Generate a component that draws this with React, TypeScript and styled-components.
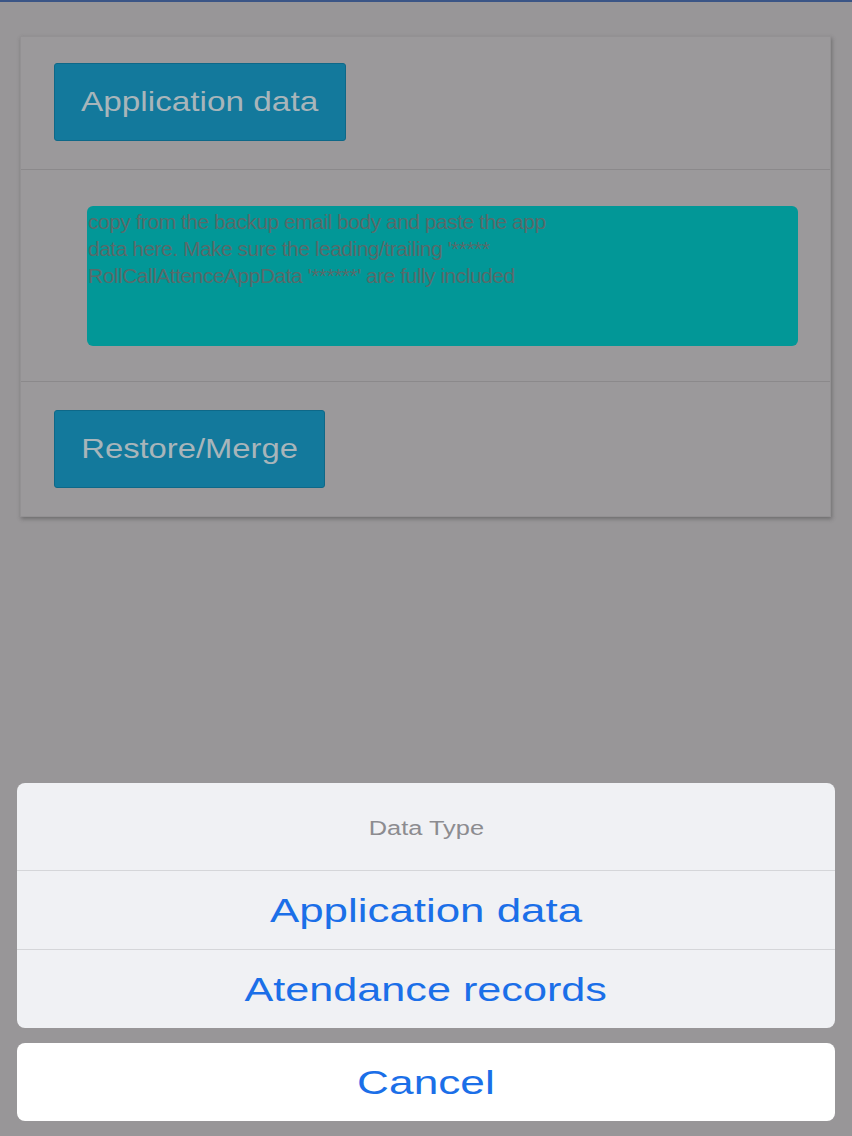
import React from "react";
import styled, { createGlobalStyle } from "styled-components";

const Global = createGlobalStyle`
  html, body { margin: 0; padding: 0; }
  body {
    background: #989698;
    font-family: "Liberation Sans", Arial, sans-serif;
    width: 852px;
    height: 1136px;
    overflow: hidden;
  }
`;

const Page = styled.div`
  position: relative;
  width: 852px;
  height: 1136px;
  border-top: 2px solid #3b5586;
  box-sizing: border-box;
  padding: 34px 21px 0 20px;
`;

const Card = styled.div`
  background: #9b999b;
  border: 1px solid #939193;
  box-shadow: 1px 2px 4px rgba(60, 60, 60, 0.45);
  display: flex;
  flex-direction: column;
`;

const Section = styled.div<{ $pt: number; $pb: number; $pl: number; $pr?: number }>`
  padding: ${(p) => p.$pt}px ${(p) => p.$pr ?? 0}px ${(p) => p.$pb}px ${(p) => p.$pl}px;
  display: flex;
  & + & {
    border-top: 1px solid #8b898b;
  }
`;

const Stretch = styled.span<{ $sx: number }>`
  display: inline-block;
  white-space: nowrap;
  transform: scaleX(${(p) => p.$sx});
  transform-origin: center;
`;

const Button = styled.button<{ $w: number }>`
  width: ${(p) => p.$w}px;
  height: 78px;
  padding: 0;
  display: flex;
  align-items: center;
  justify-content: center;
  background: #13799c;
  border: 1px solid #0e6888;
  border-radius: 3px;
  color: #a8b5ba;
  font-family: "Liberation Sans", Arial, sans-serif;
  font-size: 28px;
  cursor: pointer;
`;

const DataArea = styled.textarea`
  flex: 1;
  height: 140px;
  box-sizing: border-box;
  background: #029797;
  border: none;
  border-radius: 6px;
  padding: 2px 0 0 1px;
  resize: none;
  font-family: "Liberation Sans", Arial, sans-serif;
  font-size: 21px;
  line-height: 27px;
  letter-spacing: -0.5px;
  color: #596a6a;
  outline: none;
  &::placeholder {
    color: #596a6a;
  }
`;

const Sheet = styled.div`
  position: absolute;
  left: 17px;
  right: 17px;
  bottom: 15px;
  display: flex;
  flex-direction: column;
  gap: 15px;
`;

const Group = styled.div<{ $white?: boolean }>`
  background: ${(p) => (p.$white ? "#ffffff" : "#f0f1f4")};
  border-radius: 8px;
  overflow: hidden;
  display: flex;
  flex-direction: column;
`;

const Title = styled.div`
  height: 88px;
  padding-top: 3px;
  box-sizing: border-box;
  display: flex;
  align-items: center;
  justify-content: center;
  color: #8c8c90;
  font-size: 20px;
  border-bottom: 1px solid #d5d6d9;
`;

const Option = styled.div`
  height: 78px;
  display: flex;
  align-items: center;
  justify-content: center;
  color: #1b6fe8;
  font-size: 34px;
  & + & {
    border-top: 1px solid #d5d6d9;
  }
`;

export default function App() {
  return (
    <>
      <Global />
      <Page>
        <Card>
          <Section $pt={26} $pb={28} $pl={33}>
            <Button $w={292}>
              <Stretch $sx={1.19}>Application data</Stretch>
            </Button>
          </Section>
          <Section $pt={36} $pb={35} $pl={66} $pr={32}>
            <DataArea
              placeholder={
                "copy from the backup email body and paste the app\ndata here. Make sure the leading/trailing '*****\nRollCallAttenceAppData '******' are fully included"
              }
            />
          </Section>
          <Section $pt={28} $pb={28} $pl={33}>
            <Button $w={271}>
              <Stretch $sx={1.17}>Restore/Merge</Stretch>
            </Button>
          </Section>
        </Card>
        <Sheet>
          <Group>
            <Title>
              <Stretch $sx={1.27}>Data Type</Stretch>
            </Title>
            <Option>
              <Stretch $sx={1.29}>Application data</Stretch>
            </Option>
            <Option>
              <Stretch $sx={1.27}>Atendance records</Stretch>
            </Option>
          </Group>
          <Group $white>
            <Option>
              <Stretch $sx={1.3}>Cancel</Stretch>
            </Option>
          </Group>
        </Sheet>
      </Page>
    </>
  );
}
